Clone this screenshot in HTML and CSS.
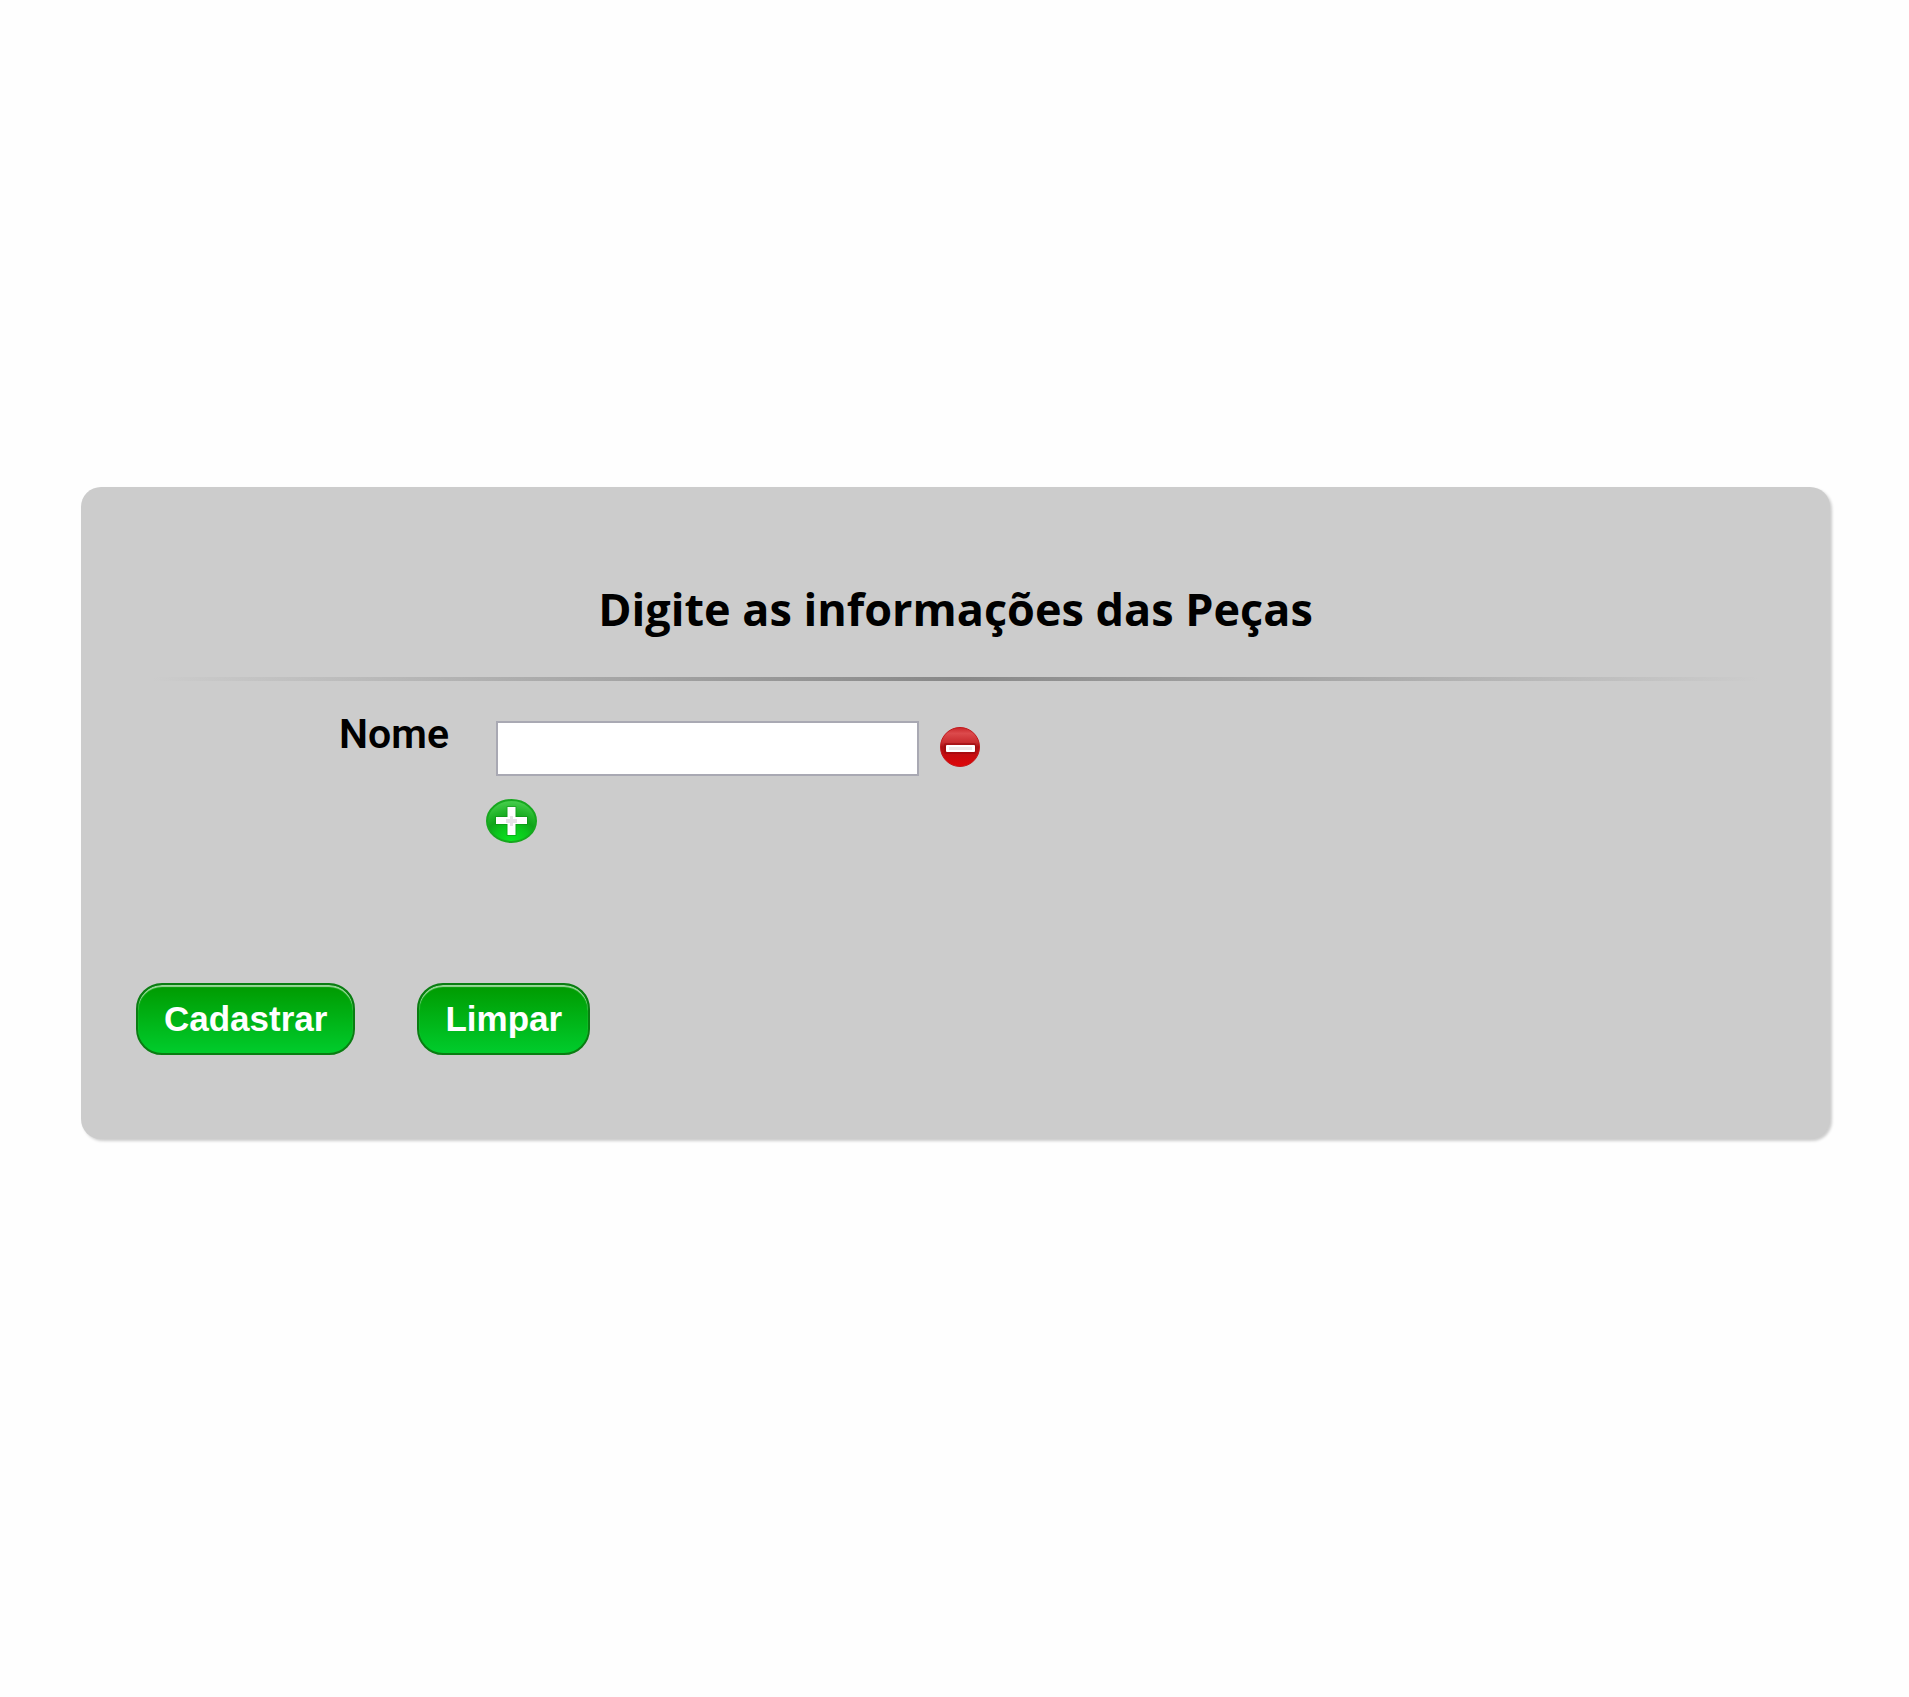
FILE: index.html
```html
<!DOCTYPE html>
<html lang="pt-BR">
<head>
<meta charset="utf-8">
<meta name="viewport" content="width=device-width, initial-scale=1">
<title>Cadastro de Peças</title>
<link rel="stylesheet" href="styles.css">
</head>
<body>
<main class="page">
  <form class="card">
    <h1 class="title">Digite as informações das Peças</h1>
    <hr class="divider">
    <div class="field">
      <label class="label" for="nome">Nome</label>
      <div class="entries">
        <div class="entry">
          <input class="input" type="text" id="nome" name="nome">
          <button class="icon-button remove" type="button" aria-label="Remover">
            <svg width="40" height="40" viewBox="0 0 40 40" aria-hidden="true">
              <defs>
                <linearGradient id="red" x1="0" y1="0" x2="0" y2="1">
                  <stop offset="0" stop-color="#c9262a"/>
                  <stop offset="0.15" stop-color="#dc4a4c"/>
                  <stop offset="0.38" stop-color="#c92c2f"/>
                  <stop offset="0.5" stop-color="#a81114"/>
                  <stop offset="0.7" stop-color="#c40c0f"/>
                  <stop offset="1" stop-color="#e00508"/>
                </linearGradient>
              </defs>
              <circle cx="20" cy="20" r="19.5" fill="url(#red)" stroke="#c3181b"/>
              <rect x="4" y="16" width="32" height="11" rx="2" fill="#97080b" opacity=".5"/>
              <rect x="6" y="18" width="29" height="7" rx="1" fill="#fff"/>
              <rect x="9" y="20" width="23" height="3" fill="#eee9e9"/>
            </svg>
          </button>
        </div>
        <button class="icon-button add" type="button" aria-label="Adicionar">
          <svg width="51" height="44" viewBox="0 0 51 44" aria-hidden="true">
            <defs>
              <radialGradient id="green" cx=".5" cy="1" r=".95">
                <stop offset="0" stop-color="#08e820"/>
                <stop offset="0.4" stop-color="#0bc41c"/>
                <stop offset="0.6" stop-color="#10a41a"/>
                <stop offset="0.8" stop-color="#25b82d"/>
                <stop offset="1" stop-color="#43cb49"/>
              </radialGradient>
            </defs>
            <ellipse cx="25.500" cy="22" rx="24.500" ry="21" fill="url(#green)" stroke="#17a71f" stroke-width="2"/>
            <path d="M21.500 8h8v10h11.500v7H29.500v11h-8V25H10v-7h11.500z" fill="#fff" stroke="#0b8a14" stroke-opacity=".45" stroke-width="2" stroke-linejoin="round" paint-order="stroke"/>
            <path d="M24 17h3v3h4v4h-4v3h-3v-3h-4v-4h4z" fill="#e6e2e8"/>
          </svg>
        </button>
      </div>
    </div>
    <div class="actions">
      <button class="button" type="submit">Cadastrar</button>
      <button class="button" type="reset">Limpar</button>
    </div>
  </form>
</main>
</body>
</html>
```
FILE: styles.css
```css
* {
  box-sizing: border-box;
}

body {
  margin: 0;
  background: #fefefe;
  color: #000;
  font-family: Roboto, "Liberation Sans", sans-serif;
}

.page {
  padding: 487px 79px 80px 81px;
}

.card {
  padding: 86px 54px 84px;
  border-radius: 20px;
  background: #ccc;
  box-shadow: 2px 2px 3px rgba(0, 0, 0, .2);
}

.title {
  margin: 0;
  font-family: "Trebuchet MS", "Open Sans", sans-serif;
  font-size: 45px;
  font-weight: 700;
  line-height: 72px;
  text-align: center;
}

.divider {
  height: 4px;
  margin: 32px 0 40px;
  border: 0;
  background: linear-gradient(to right, transparent 1%, #888 50%, transparent 99%);
}

.field {
  display: grid;
  grid-template-columns: 314px 1fr;
  column-gap: 47px;
}

.label {
  font-size: 41px;
  font-weight: 600;
  line-height: 48px;
  margin-top: -11px;
  text-align: right;
}

.entry {
  display: flex;
  align-items: center;
  gap: 21px;
}

.input {
  width: 423px;
  height: 55px;
  padding: 0 12px;
  border: 2px solid #a9a9b3;
  background: #fff;
  font: inherit;
  font-size: 32px;
}

.icon-button {
  display: block;
  padding: 0;
  border: 0;
  background: none;
  cursor: pointer;
}

.icon-button svg {
  display: block;
}

.remove {
  margin-bottom: 4px;
}

.add {
  margin: 23px 0 0 -10px;
}

.actions {
  display: flex;
  gap: 62px;
  margin-top: 140px;
  padding-left: 1px;
}

.button {
  height: 72px;
  padding: 0 26px;
  border: 2px solid #0a7d12;
  border-radius: 26px;
  background: linear-gradient(#009a00, #00cc2c);
  box-shadow: inset 0 2px 1px rgba(255, 255, 255, .6);
  color: #fff;
  font-family: "Liberation Sans", Arial, sans-serif;
  font-size: 35px;
  font-weight: 700;
  cursor: pointer;
}
```
